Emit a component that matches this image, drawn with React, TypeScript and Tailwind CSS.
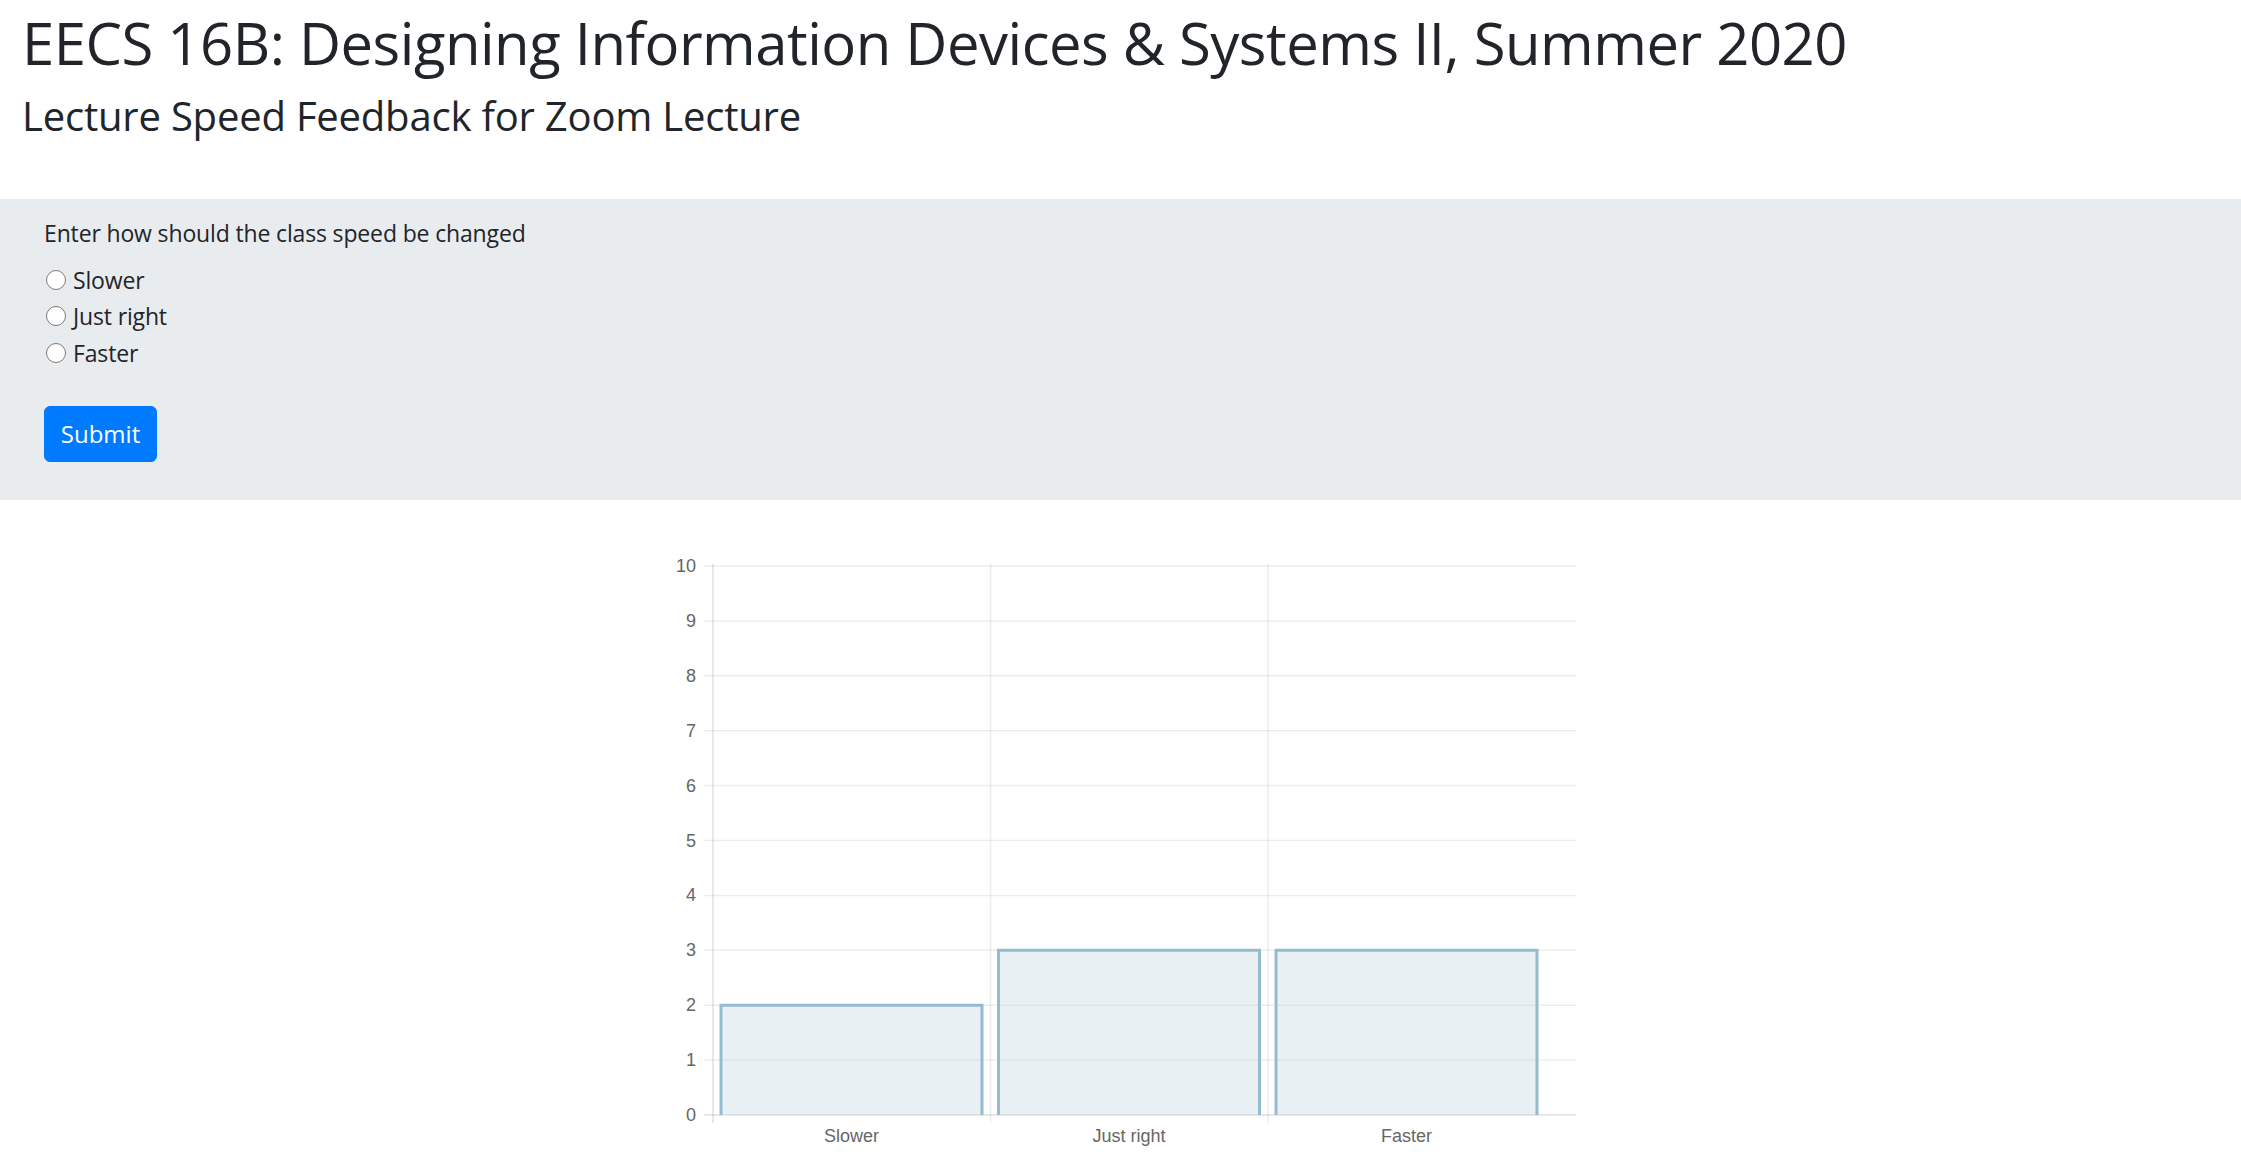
import { useState } from "react";

type Speed = "Slower" | "Just right" | "Faster";

const options: Speed[] = ["Slower", "Just right", "Faster"];

// votes per option, drawn as chart.js-like bars
const votes: Record<Speed, number> = { Slower: 2, "Just right": 3, Faster: 3 };

// chart geometry (svg coords)
const axisX = 72;
const rightX = 935;
const zeroY = 574;
const unit = 54.9;
const catWidth = 277.5;

function SpeedChart() {
  const ticks = Array.from({ length: 11 }, (_, i) => i);

  return (
    <svg width={960} height={616} viewBox="0 0 960 616" className="block">
      {/* horizontal grid */}
      {ticks.map((t) => {
        const y = zeroY - t * unit;
        return (
          <g key={t}>
            <line
              x1={63}
              x2={rightX}
              y1={y}
              y2={y}
              stroke={t === 0 ? "rgba(0,0,0,0.13)" : "rgba(0,0,0,0.07)"}
              strokeWidth={1.5}
            />
            <text
              x={55}
              y={y}
              textAnchor="end"
              dominantBaseline="central"
              fontSize={18}
              fill="#666"
              fontFamily='"Liberation Sans", Arial, sans-serif'
            >
              {t}
            </text>
          </g>
        );
      })}

      {/* vertical grid */}
      {[0, 1, 2].map((i) => {
        const x = axisX + i * catWidth;
        return (
          <line
            key={i}
            x1={x}
            x2={x}
            y1={23}
            y2={582}
            stroke={i === 0 ? "rgba(0,0,0,0.12)" : "rgba(0,0,0,0.07)"}
            strokeWidth={1.5}
          />
        );
      })}

      {/* bars */}
      {options.map((opt, i) => {
        const x1 = axisX + i * catWidth + 8;
        const x2 = x1 + 261;
        const top = zeroY - votes[opt] * unit;
        return (
          <g key={opt}>
            <rect x={x1} y={top} width={x2 - x1} height={zeroY - top} fill="rgba(180,205,218,0.3)" />
            <path
              d={`M${x1} ${zeroY} V${top} H${x2} V${zeroY}`}
              fill="none"
              stroke="#95bbcf"
              strokeWidth={3}
            />
            <text
              x={(x1 + x2) / 2}
              y={595}
              textAnchor="middle"
              dominantBaseline="central"
              fontSize={18}
              fill="#666"
              fontFamily='"Liberation Sans", Arial, sans-serif'
            >
              {opt}
            </text>
          </g>
        );
      })}
    </svg>
  );
}

export default function App() {
  const [choice, setChoice] = useState<Speed | null>(null);

  return (
    <div className="h-screen overflow-hidden bg-white text-[#212529] font-['Open_Sans',sans-serif]">
      <header className="px-[22px]">
        <h1 className="mt-[8px] text-[58px] leading-[1.2] font-normal tracking-[-0.5px]">
          EECS 16B: Designing Information Devices &amp; Systems II, Summer 2020
        </h1>
        <h3 className="mt-[14px] text-[40px] leading-[1.2] font-normal tracking-[-0.2px]">
          Lecture Speed Feedback for Zoom Lecture
        </h3>
      </header>

      <form
        className="mt-[59px] bg-[#e9ecef] px-[44px] pt-[16px] pb-[38px]"
        onSubmit={(e) => e.preventDefault()}
      >
        <p className="mb-[11px] text-[23px] leading-[36px] tracking-[-0.15px]">
          Enter how should the class speed be changed
        </p>
        <div className="flex flex-col">
          {options.map((opt) => (
            <label
              key={opt}
              className="flex h-[36.5px] items-center text-[23px] leading-[36px] tracking-[-0.15px] cursor-pointer"
            >
              <input
                type="radio"
                name="speed"
                className="sr-only"
                checked={choice === opt}
                onChange={() => setChoice(opt)}
              />
              <span className="mr-[7px] ml-[2px] flex h-[20px] w-[20px] items-center justify-center rounded-full border-[1.5px] border-[#7a7a7a] bg-white">
                {choice === opt && <span className="h-[10px] w-[10px] rounded-full bg-[#0075ff]" />}
              </span>
              {opt}
            </label>
          ))}
        </div>
        <button
          type="submit"
          className="mt-[35px] h-[56px] w-[113px] rounded-[6px] border border-[#007bff] bg-[#007bff] text-[24px] leading-[36px] text-white"
        >
          Submit
        </button>
      </form>

      <div className="mt-[41px] flex justify-center">
        <SpeedChart />
      </div>
    </div>
  );
}
